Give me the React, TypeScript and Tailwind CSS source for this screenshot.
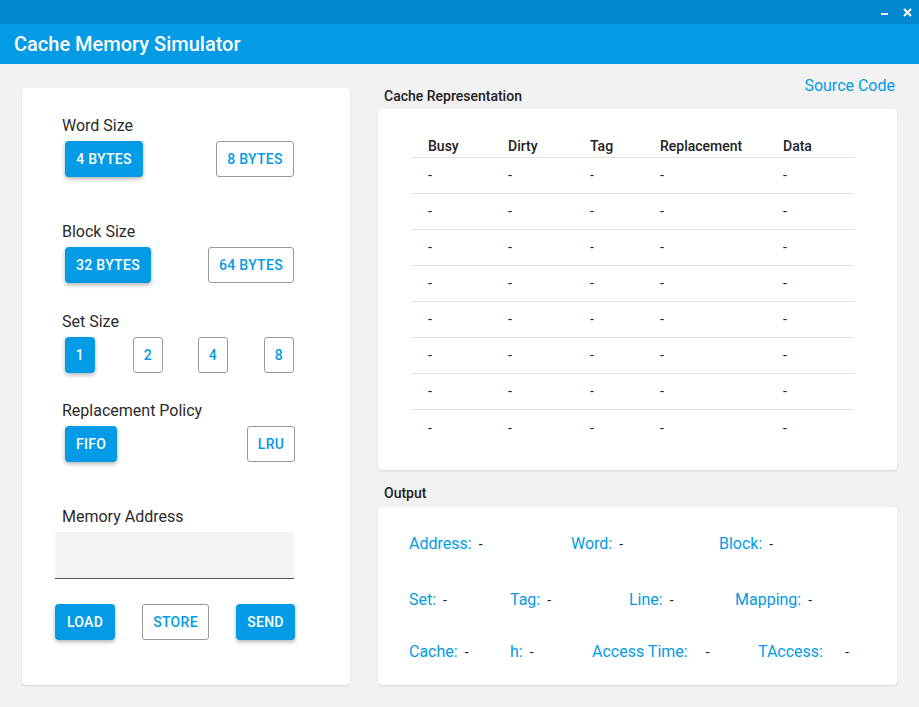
import React from 'react';

type BtnProps = {
  label: string;
  active?: boolean;
  width: string;
};

function OptionButton({ label, active, width }: BtnProps) {
  return (
    <button
      type="button"
      className={
        active
          ? `${width} h-[36px] rounded-[4px] bg-[#039be5] text-white text-[14px] font-medium tracking-[0.3px] shadow-[0_2px_4px_rgba(0,0,0,0.3)]`
          : `${width} h-[36px] rounded-[3px] border border-[#9a9a9a] bg-white text-[#039be5] text-[14px] font-medium tracking-[0.3px]`
      }
    >
      {label}
    </button>
  );
}

function Label({ text }: { text: string }) {
  return <div className="pl-[7px] text-[16px] leading-[19px] text-[#2b2b2b]">{text}</div>;
}

const columns = ['Busy', 'Dirty', 'Tag', 'Replacement', 'Data'];
const rows = Array.from({ length: 8 });

function OutItem({ label, width, gap = 'gap-[7px]' }: { label: string; width?: string; gap?: string }) {
  return (
    <div className={`flex items-center ${gap} ${width ?? ''}`}>
      <span className="text-[16px] text-[#039be5]">{label}</span>
      <span className="text-[14px] text-[#222]">-</span>
    </div>
  );
}

export default function App() {
  return (
    <div
      className="w-[919px] h-[707px] bg-[#f2f2f2] flex flex-col overflow-hidden"
      style={{ fontFamily: 'Roboto, "Liberation Sans", sans-serif' }}
    >
      {/* window bar */}
      <div className="h-[24px] bg-[#0288d1] flex items-center justify-end pr-[7px] gap-[15px] text-white">
        <span className="w-[7px] h-[2px] bg-white mt-[4px]" />
        <svg width="9" height="9" viewBox="0 0 9 9">
          <path d="M1 1L8 8M8 1L1 8" stroke="white" strokeWidth="2" />
        </svg>
      </div>
      {/* header */}
      <div className="h-[40px] bg-[#039be5] flex items-center pl-[14px]">
        <h1 className="text-[20px] font-medium text-white">Cache Memory Simulator</h1>
      </div>

      <div className="flex gap-[28px] pl-[22px]">
        {/* left card */}
        <div className="mt-[24px] w-[328px] h-[597px] bg-white rounded-[4px] shadow-[0_1px_2px_rgba(0,0,0,0.12)] pt-[28px] pl-[33px]">
          <div className="w-[240px] flex flex-col">
            <Label text="Word Size" />
            <div className="mt-[6px] pl-[10px] pr-[1px] flex justify-between">
              <OptionButton label="4 BYTES" active width="w-[78px]" />
              <OptionButton label="8 BYTES" width="w-[78px]" />
            </div>

            <div className="mt-[45px]">
              <Label text="Block Size" />
            </div>
            <div className="mt-[6px] pl-[10px] pr-[1px] flex justify-between">
              <OptionButton label="32 BYTES" active width="w-[86px]" />
              <OptionButton label="64 BYTES" width="w-[86px]" />
            </div>

            <div className="mt-[29px]">
              <Label text="Set Size" />
            </div>
            <div className="mt-[6px] pl-[10px] pr-[1px] flex">
              <OptionButton label="1" active width="w-[30px]" />
              <div className="ml-[38px]">
                <OptionButton label="2" width="w-[30px]" />
              </div>
              <div className="ml-[35px]">
                <OptionButton label="4" width="w-[30px]" />
              </div>
              <div className="ml-[36px]">
                <OptionButton label="8" width="w-[30px]" />
              </div>
            </div>

            <div className="mt-[28px]">
              <Label text="Replacement Policy" />
            </div>
            <div className="mt-[6px] pl-[10px] flex justify-between">
              <OptionButton label="FIFO" active width="w-[52px]" />
              <OptionButton label="LRU" width="w-[48px]" />
            </div>

            <div className="mt-[45px]">
              <Label text="Memory Address" />
            </div>
            <input
              type="text"
              className="mt-[6px] w-[239px] h-[47px] bg-[#f4f4f4] border-b border-[#555] outline-none px-2 text-[16px]"
            />
            <div className="mt-[25px] flex justify-between">
              <OptionButton label="LOAD" active width="w-[60px]" />
              <OptionButton label="STORE" width="w-[67px]" />
              <OptionButton label="SEND" active width="w-[59px]" />
            </div>
          </div>
        </div>

        {/* right column */}
        <div className="w-[519px] pt-[12px] flex flex-col">
          <div className="flex justify-between items-start">
            <div className="mt-[12px] pl-[6px] text-[14px] leading-[16px] font-medium text-[#222]">
              Cache Representation
            </div>
            <a className="pr-[2px] text-[16px] leading-[19px] text-[#039be5] cursor-pointer">Source Code</a>
          </div>

          <div className="mt-[5px] bg-white rounded-[4px] shadow-[0_1px_2px_rgba(0,0,0,0.12)] pt-[27px] pb-[24px] pl-[34px]">
            <div className="w-[442px]">
              <div className="grid grid-cols-[80px_82px_70px_123px_1fr] h-[22px] items-center border-b border-[#e0e0e0]">
                {columns.map((c) => (
                  <div key={c} className="pl-[16px] text-[14px] font-medium text-[#222]">
                    {c}
                  </div>
                ))}
              </div>
              {rows.map((_, i) => (
                <div
                  key={i}
                  className={`grid grid-cols-[80px_82px_70px_123px_1fr] h-[36px] items-center ${
                    i < rows.length - 1 ? 'border-b border-[#e0e0e0]' : ''
                  }`}
                >
                  {columns.map((c) => (
                    <div key={c} className="pl-[16px] text-[14px] text-[#222]">
                      -
                    </div>
                  ))}
                </div>
              ))}
            </div>
          </div>

          <div className="mt-[15px] pl-[6px] text-[14px] leading-[16px] font-medium text-[#222]">Output</div>

          <div className="mt-[6px] h-[178px] bg-white rounded-[4px] shadow-[0_1px_2px_rgba(0,0,0,0.12)] pt-[27px] pl-[31px]">
            <div className="flex h-[20px] items-center">
              <OutItem label="Address:" width="w-[162px]" />
              <OutItem label="Word:" width="w-[148px]" />
              <OutItem label="Block:" />
            </div>
            <div className="mt-[36px] flex h-[20px] items-center">
              <OutItem label="Set:" width="w-[101px]" />
              <OutItem label="Tag:" width="w-[119px]" />
              <OutItem label="Line:" width="w-[106px]" />
              <OutItem label="Mapping:" />
            </div>
            <div className="mt-[32px] flex h-[20px] items-center">
              <OutItem label="Cache:" width="w-[101px]" />
              <OutItem label="h:" width="w-[82px]" />
              <OutItem label="Access Time:" width="w-[166px]" gap="gap-[18px]" />
              <OutItem label="TAccess:" gap="gap-[22px]" />
            </div>
          </div>
        </div>
      </div>
    </div>
  );
}
